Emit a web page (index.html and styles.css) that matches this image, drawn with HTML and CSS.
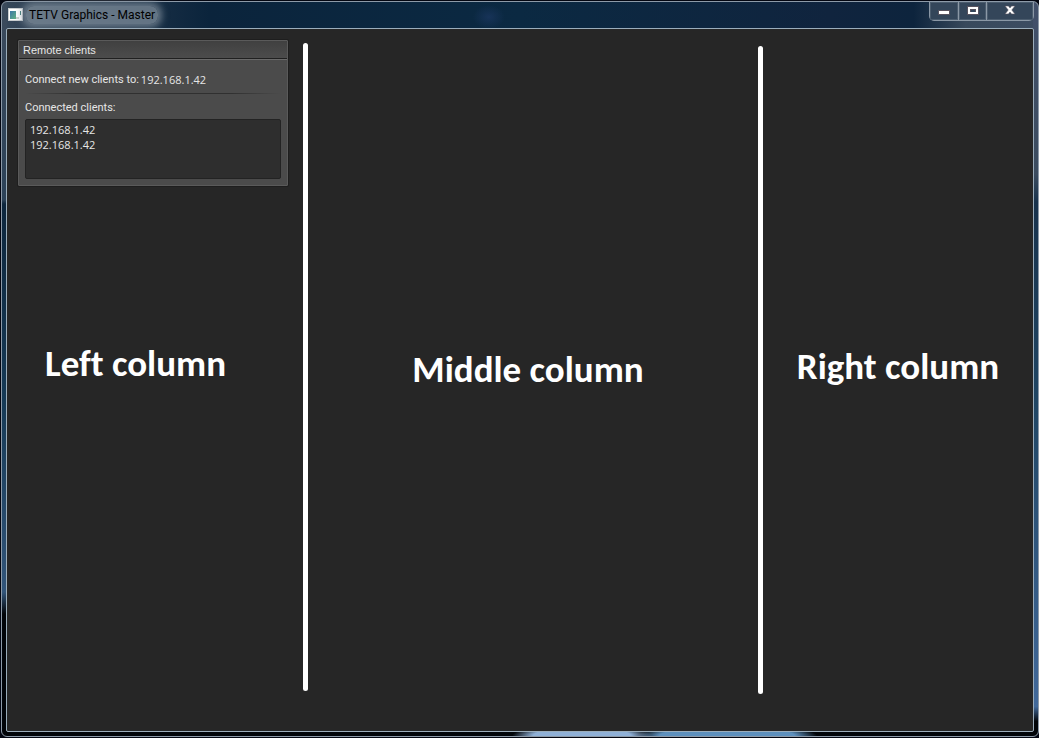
FILE: index.html
```html
<!DOCTYPE html>
<html lang="en">
<head>
<meta charset="utf-8">
<title>TETV Graphics - Master</title>
<link rel="stylesheet" href="styles.css">
</head>
<body>
<div class="window">
  <header class="titlebar">
    <svg class="app-icon" width="15" height="13" viewBox="0 0 15 13" aria-hidden="true">
      <defs><linearGradient id="pic" x1="0" y1="0" x2="1" y2="1"><stop offset="0" stop-color="#3d78a8"/><stop offset="1" stop-color="#62b283"/></linearGradient></defs>
      <rect width="15" height="13" fill="#fff"/>
      <rect x=".5" y=".5" width="14" height="12" fill="none" stroke="#c9cdd0"/>
      <rect x="2" y="3" width="6" height="8" fill="url(#pic)"/>
      <rect x="8" y="9" width="3" height="2" fill="#ccd2d0"/>
      <rect x="12" y="3" width="1" height="4" fill="#3f7d78"/>
    </svg>
    <h1 class="title">TETV Graphics - Master</h1>
    <div class="controls">
      <button class="control" type="button" aria-label="Minimize">
        <svg width="12" height="12" viewBox="0 0 12 12"><rect x=".5" y="6.500" width="11" height="4" fill="#fff" stroke="#57535f"/></svg>
      </button>
      <button class="control" type="button" aria-label="Maximize">
        <svg width="12" height="12" viewBox="0 0 12 12"><path d="M0 2h12v9h-12z" fill="#57535f"/><path d="M1 3h10v7h-10zM3 5v3h6v-3z" fill="#fff" fill-rule="evenodd"/><path d="M4 6h4v2h-4z" fill="#34465a"/></svg>
      </button>
      <button class="control control-close" type="button" aria-label="Close">
        <svg width="12" height="12" viewBox="0 0 12 12"><path d="M1 2h3.500l1.500 1.900 1.500-1.900h3.500l-3.200 4 3.200 4h-3.500l-1.500-1.900-1.500 1.900h-3.500l3.200-4z" fill="#fff" stroke="#57535f" stroke-width=".6"/></svg>
      </button>
    </div>
  </header>
  <main class="client">
    <section class="column column-left">
      <section class="panel">
        <h2 class="panel-title">Remote clients</h2>
        <div class="panel-body">
          <p class="address">Connect new clients to: <span class="ip">192.168.1.42</span></p>
          <hr class="rule">
          <p class="list-label" id="clients-label">Connected clients:</p>
          <ul class="client-list" aria-labelledby="clients-label">
            <li>192.168.1.42</li>
            <li>192.168.1.42</li>
          </ul>
        </div>
      </section>
      <h2 class="column-name">Left column</h2>
    </section>
    <div class="divider divider-first"></div>
    <section class="column column-middle"><h2 class="column-name">Middle column</h2></section>
    <div class="divider divider-second"></div>
    <section class="column column-right"><h2 class="column-name">Right column</h2></section>
  </main>
</div>
</body>
</html>
```
FILE: styles.css
```css
* { box-sizing: border-box; }

body {
  display: flex;
  min-height: 100vh;
  margin: 0;
  padding: 1px 0 1px 1px;
  background: #030611;
  color: #e6e6e6;
  font: 11px/14px Roboto, "Open Sans", sans-serif;
}

h1, h2, p, ul { margin: 0; padding: 0; font-weight: normal; }

.window {
  display: flex;
  flex: 1;
  flex-direction: column;
  padding: 0 4px 4px;
  border: 1px solid #8d9aa8;
  border-radius: 6px;
  background:
    radial-gradient(ellipse 70px 12px at 56% 100%, #8fb0d6 70%, transparent) bottom / 100% 5px no-repeat,
    radial-gradient(ellipse 90px 12px at 70% 100%, #5d90bd 75%, transparent) bottom / 100% 5px no-repeat,
    linear-gradient(#42506a, #3c4c5f 172px, #18324c 200px, #204563 400px, #42699a 96%, #020509 98%) right / 5px 100% no-repeat,
    linear-gradient(#3b4a5c, #2c4258 198px, #0d263d 202px, #163a56 400px, #32557a 590px, #020509 612px) left / 5px 100% no-repeat,
    radial-gradient(ellipse 16px 12px at 47% 15px, #173358, transparent) top / 100% 27px no-repeat,
    linear-gradient(90deg, #36475a, #0b243c 20%, #0b2942 50%, #10243e 80%, #0d243d 88%, #38495c 93%, #3d4d62) top / 100% 27px no-repeat,
    #020509;
}

.titlebar { display: flex; height: 26px; padding-left: 2px; }

.app-icon { margin-top: 6px; }

.title {
  align-self: flex-start;
  margin: 4px 0 0 3px;
  padding: 0 3px;
  border-radius: 8px;
  background: rgba(126, 140, 154, .75);
  box-shadow: 0 0 7px 4px rgba(126, 140, 154, .75);
  color: #000;
  font-size: 12px;
  line-height: 18px;
}

.controls {
  display: flex;
  height: 19px;
  margin-left: auto;
  border: 1px solid #8b98a6;
  border-top: 0;
  border-radius: 0 0 5px 5px;
  background: #34465a;
}

.control {
  display: flex;
  align-items: center;
  justify-content: center;
  width: 28px;
  padding: 0 0 2px;
  border: 0;
  border-left: 1px solid #8b98a6;
  background: none;
  box-shadow: inset 0 0 0 1px #4b5c6e;
}

.control:first-child { border-left: 0; }
.control-close { width: 47px; }

.client {
  display: grid;
  flex: 1;
  grid-template-columns: 296px 5px 1fr 5px 270px;
  border: 1px solid #9badbb;
  border-radius: 2px;
  background: #262626;
}

.column { display: flex; flex-direction: column; }
.column-left { padding: 11px 15px 0 11px; }
.column-middle { align-items: center; justify-content: center; padding: 0 10px 20px 0; }
.column-right { align-items: center; justify-content: center; padding-bottom: 26px; }

.column-name {
  color: #fff;
  font: bold 37px/44px Carlito, Lato, sans-serif;
  font-variant-ligatures: none;
  white-space: nowrap;
}

.column-left .column-name { margin: 156px 0 0 27px; }

.divider { border-radius: 3px; background: #fff; }
.divider-first { margin: 14px 0 40px; }
.divider-second { margin: 17px 0 37px; }

.panel {
  border: 1px solid #5a5a5a;
  border-radius: 1px;
  background: #4b4b4b;
  box-shadow: 0 0 0 1px #1e1e1e;
}

.panel-title {
  padding: 2px 4px 0;
  border-bottom: 1px solid #202020;
  background: linear-gradient(#404040, #4c4c4c);
  box-shadow: 0 1px #6a6a6a;
  font: 11px/15px "Liberation Sans", Arial, sans-serif;
}

.panel-body { padding: 14px 6px 6px; }

.address { display: flex; gap: 2px; }
.ip, .client-list { font-family: "Open Sans", "Noto Sans", sans-serif; }

.rule {
  height: 1px;
  margin: 6px 0 7px;
  border: 0;
  background: linear-gradient(90deg, transparent, #303030 20%, #303030 80%, transparent);
}

.client-list {
  min-height: 60px;
  margin-top: 4px;
  padding: 2px 4px;
  border: 1px solid #232323;
  border-radius: 2px;
  background: #2e2e2e;
  list-style: none;
  line-height: 15px;
}
```
